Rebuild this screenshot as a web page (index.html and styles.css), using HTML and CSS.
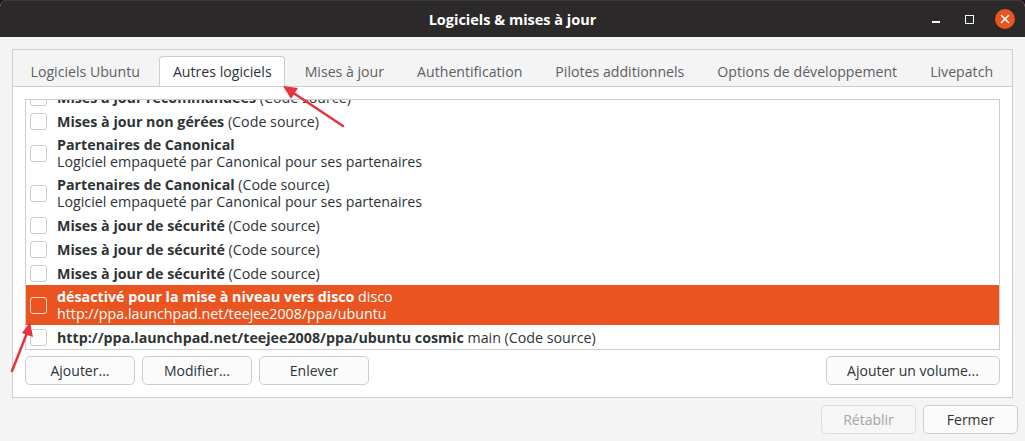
FILE: index.html
```html
<!DOCTYPE html>
<html lang="fr">

<head>
	<meta charset="UTF-8">
	<title>Logiciels &amp; mises à jour</title>
	<link rel="stylesheet" href="styles.css">
</head>

<body>
	<div class="window">
		<div class="titlebar">
			<span></span>
			<h1 class="title">Logiciels &amp; mises à jour</h1>
			<div class="controls">
				<span class="ctl-min"></span>
				<span class="ctl-max"></span>
				<span class="ctl-close">
					<svg width="10" height="10" viewBox="0 0 10 10"><path d="M1 1L9 9M9 1L1 9" stroke="#fff" stroke-width="1.6" /></svg>
				</span>
			</div>
		</div>

		<div class="notebook">
			<div class="tabs">
				<span class="tab">Logiciels Ubuntu</span>
				<span class="tab active">Autres logiciels</span>
				<span class="tab">Mises à jour</span>
				<span class="tab">Authentification</span>
				<span class="tab">Pilotes additionnels</span>
				<span class="tab">Options de développement</span>
				<span class="tab">Livepatch</span>
			</div>

			<div class="page">
				<div class="list">
					<div class="rows">
						<div class="row">
							<span class="check"></span>
							<div class="label"><b>Mises à jour recommandées</b> (Code source)</div>
						</div>
						<div class="row">
							<span class="check"></span>
							<div class="label"><b>Mises à jour non gérées</b> (Code source)</div>
						</div>
						<div class="row">
							<span class="check"></span>
							<div class="label"><b>Partenaires de Canonical</b><br>Logiciel empaqueté par Canonical pour ses partenaires</div>
						</div>
						<div class="row">
							<span class="check"></span>
							<div class="label"><b>Partenaires de Canonical</b> (Code source)<br>Logiciel empaqueté par Canonical pour ses partenaires</div>
						</div>
						<div class="row">
							<span class="check"></span>
							<div class="label"><b>Mises à jour de sécurité</b> (Code source)</div>
						</div>
						<div class="row">
							<span class="check"></span>
							<div class="label"><b>Mises à jour de sécurité</b> (Code source)</div>
						</div>
						<div class="row">
							<span class="check"></span>
							<div class="label"><b>Mises à jour de sécurité</b> (Code source)</div>
						</div>
						<div class="row selected">
							<span class="check"></span>
							<div class="label"><b>désactivé pour la mise à niveau vers disco</b> disco<br>http://ppa.launchpad.net/teejee2008/ppa/ubuntu</div>
						</div>
						<div class="row">
							<span class="check"></span>
							<div class="label"><b>http://ppa.launchpad.net/teejee2008/ppa/ubuntu cosmic</b> main (Code source)</div>
						</div>
					</div>
				</div>

				<div class="actions">
					<button class="btn btn-fixed" type="button">Ajouter...</button>
					<button class="btn btn-fixed" type="button">Modifier...</button>
					<button class="btn btn-fixed" type="button">Enlever</button>
					<button class="btn btn-volume" type="button">Ajouter un volume...</button>
				</div>
			</div>
		</div>

		<div class="footer">
			<button class="btn btn-dialog" type="button" disabled>Rétablir</button>
			<button class="btn btn-dialog" type="button">Fermer</button>
		</div>

		<!-- annotations -->
		<svg class="arrows" width="1025" height="441" viewBox="0 0 1025 441">
			<g stroke="#e8323c" stroke-width="2.5" fill="#e8323c" stroke-linecap="round">
				<line x1="343" y1="126" x2="292" y2="92" />
				<polygon points="283,86 298,88 291,99" stroke="none" />
				<line x1="12" y1="371" x2="27" y2="333" />
				<polygon points="30,322 33,337 22,333" stroke="none" />
			</g>
		</svg>
	</div>
</body>

</html>
```

FILE: styles.css
```css
* {
	margin: 0;
	padding: 0;
	box-sizing: border-box;
}

body {
	background: #2c0a22;
	font-family: "Open Sans", "Noto Sans", sans-serif;
	color: #2e3436;
}

.window {
	position: relative;
	width: 1025px;
	height: 441px;
	background: #f4f4f5;
	border-radius: 7px 7px 0 0;
	overflow: hidden;
}

/* barre de titre */
.titlebar {
	display: grid;
	grid-template-columns: 1fr auto 1fr;
	align-items: center;
	height: 37px;
	background: #2b2929;
	border-top: 1px solid #3b3939;
}

.title {
	font-size: 14.5px;
	font-weight: 700;
	color: #fff;
}

.controls {
	display: flex;
	align-items: center;
	justify-self: end;
	margin-right: 10px;
}

.ctl-min {
	width: 8px;
	height: 2px;
	margin-top: 6px;
	background: #fff;
}

.ctl-max {
	width: 9px;
	height: 9px;
	margin-left: 25px;
	border: 1.5px solid #fff;
}

.ctl-close {
	display: flex;
	align-items: center;
	justify-content: center;
	width: 20px;
	height: 20px;
	margin-left: 21px;
	border-radius: 50%;
	background: #e95420;
}

/* onglets */
.notebook {
	margin: 12px 12px 0;
	border: 1px solid #cdcdcd;
}

.tabs {
	display: flex;
	align-items: flex-end;
	height: 37px;
	padding-left: 1px;
	border-bottom: 1px solid #cdcdcd;
	overflow: hidden;
}

.tab {
	display: flex;
	flex: none;
	align-items: center;
	height: 31px;
	margin: 0 3px -1px;
	padding: 0 12.5px 2px;
	font-size: 14.15px;
	white-space: nowrap;
	color: #5d5f63;
	border: 1px solid transparent;
	border-bottom: none;
	border-radius: 4px 4px 0 0;
}

.tab.active {
	color: #2e3436;
	background: #fff;
	border-color: #cdcdcd;
}

.page {
	padding: 12px;
	background: #fff;
}

/* liste des sources */
.list {
	height: 251px;
	border: 1px solid #cdcdcd;
	overflow: hidden;
}

.rows {
	margin-top: -15px;
}

.row {
	display: flex;
	align-items: center;
	gap: 10px;
	min-height: 24px;
	padding: 3px 0 3px 4px;
	font-size: 14.25px;
	line-height: 17px;
	color: #2e3436;
}

.row b {
	font-weight: 700;
}

.check {
	flex: none;
	width: 17px;
	height: 17px;
	border: 1px solid #cbcbcb;
	border-radius: 3px;
	background: #fff;
}

.row.selected {
	color: #fff;
	background: #e95420;
}

.row.selected .check {
	border-color: #f7d4c6;
	background: transparent;
}

/* boutons */
.actions {
	display: flex;
	gap: 7px;
	margin-top: 6px;
}

.btn {
	height: 29px;
	font-family: inherit;
	font-size: 14px;
	color: #2e3436;
	border: 1px solid #cdcdcd;
	border-radius: 5px;
	background: #fbfbfb;
}

.btn-fixed {
	width: 110px;
}

.btn-volume {
	width: 174px;
	margin-left: auto;
}

.btn:disabled {
	color: #a4a6a8;
	background: #f6f6f7;
	border-color: #dcdcdc;
}

.footer {
	display: flex;
	justify-content: flex-end;
	gap: 7px;
	margin-top: 7px;
	padding-right: 7px;
}

.btn-dialog {
	width: 95px;
}

.arrows {
	position: absolute;
	top: 0;
	left: 0;
	pointer-events: none;
}
```
